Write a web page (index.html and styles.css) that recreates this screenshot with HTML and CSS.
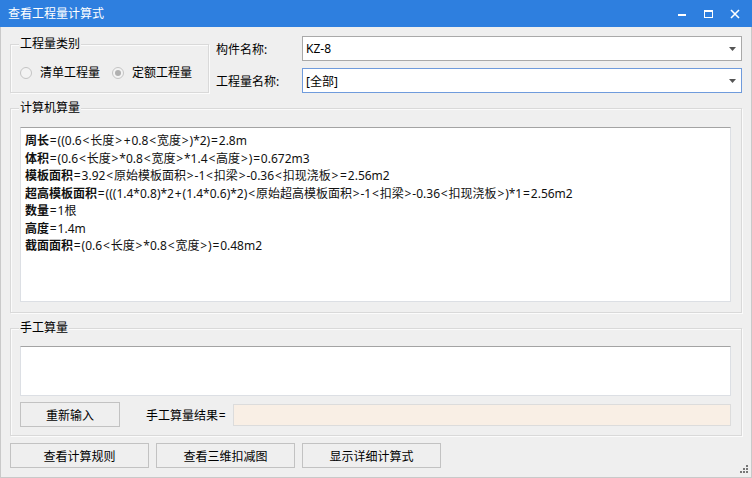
FILE: index.html
```html
<!DOCTYPE html>
<html lang="zh-CN">
<head>
<meta charset="utf-8">
<title>查看工程量计算式</title>
<link rel="stylesheet" href="styles.css">
</head>
<body>
<div class="window">
  <div class="titlebar">
    <span class="title">查看工程量计算式</span>
    <div class="controls">
      <svg class="ctl" width="26" height="27" viewBox="0 0 26 27"><rect x="8" y="14" width="8" height="2" fill="#fff"/></svg>
      <svg class="ctl" width="27" height="27" viewBox="0 0 27 27"><rect x="8.5" y="10.5" width="8" height="7" fill="none" stroke="#fff"/><rect x="8" y="10" width="9" height="2" fill="#fff"/></svg>
      <svg class="ctl" width="27" height="27" viewBox="0 0 27 27"><path d="M8 10l8 8M16 10l-8 8" stroke="#fff" stroke-width="1.6"/></svg>
    </div>
  </div>
  <div class="content">
    <div class="top-row">
      <fieldset class="group type-group">
        <legend>工程量类别</legend>
        <div class="radios">
          <label class="radio"><span class="dot"></span>清单工程量</label>
          <label class="radio checked"><span class="dot"></span>定额工程量</label>
        </div>
      </fieldset>
      <div class="form">
        <span class="label">构件名称:</span>
        <div class="combo"><span>KZ-8</span><svg class="arrow" width="7" height="4" viewBox="0 0 7 4"><path d="M0 0h7L3.5 4z" fill="#555"/></svg></div>
        <span class="label">工程量名称:</span>
        <div class="combo focused"><span>[全部]</span><svg class="arrow" width="7" height="4" viewBox="0 0 7 4"><path d="M0 0h7L3.5 4z" fill="#555"/></svg></div>
      </div>
    </div>
    <fieldset class="group calc-group">
      <legend>计算机算量</legend>
      <div class="textbox formula">
        <div><b>周长</b><span class="op">=</span>((0.6<span class="op">&lt;</span>长度<span class="op">&gt;</span><span class="op">+</span>0.8<span class="op">&lt;</span>宽度<span class="op">&gt;</span>)*2)<span class="op">=</span>2.8m</div>
        <div><b>体积</b><span class="op">=</span>(0.6<span class="op">&lt;</span>长度<span class="op">&gt;</span>*0.8<span class="op">&lt;</span>宽度<span class="op">&gt;</span>*1.4<span class="op">&lt;</span>高度<span class="op">&gt;</span>)<span class="op">=</span>0.672m3</div>
        <div><b>模板面积</b><span class="op">=</span>3.92<span class="op">&lt;</span>原始模板面积<span class="op">&gt;</span>-1<span class="op">&lt;</span>扣梁<span class="op">&gt;</span>-0.36<span class="op">&lt;</span>扣现浇板<span class="op">&gt;</span><span class="op">=</span>2.56m2</div>
        <div><b>超高模板面积</b><span class="op">=</span>(((1.4*0.8)*2<span class="op">+</span>(1.4*0.6)*2)<span class="op">&lt;</span>原始超高模板面积<span class="op">&gt;</span>-1<span class="op">&lt;</span>扣梁<span class="op">&gt;</span>-0.36<span class="op">&lt;</span>扣现浇板<span class="op">&gt;</span>)*1<span class="op">=</span>2.56m2</div>
        <div><b>数量</b><span class="op">=</span>1根</div>
        <div><b>高度</b><span class="op">=</span>1.4m</div>
        <div><b>截面面积</b><span class="op">=</span>(0.6<span class="op">&lt;</span>长度<span class="op">&gt;</span>*0.8<span class="op">&lt;</span>宽度<span class="op">&gt;</span>)<span class="op">=</span>0.48m2</div>
      </div>
    </fieldset>
    <fieldset class="group manual-group">
      <legend>手工算量</legend>
      <div class="textbox manual"></div>
      <div class="manual-row">
        <button class="btn reinput">重新输入</button>
        <span class="result-label">手工算量结果<span class="op">=</span></span>
        <div class="result"></div>
      </div>
    </fieldset>
    <div class="bottom-buttons">
      <button class="btn wide">查看计算规则</button>
      <button class="btn wide">查看三维扣减图</button>
      <button class="btn wide">显示详细计算式</button>
    </div>
    <svg class="grip" width="12" height="12" viewBox="0 0 12 12">
      <rect x="8" y="1" width="2" height="2" fill="#777"/>
      <rect x="5" y="4" width="2" height="2" fill="#777"/>
      <rect x="8" y="4" width="2" height="2" fill="#777"/>
      <rect x="2" y="7" width="2" height="2" fill="#777"/>
      <rect x="5" y="7" width="2" height="2" fill="#777"/>
      <rect x="8" y="7" width="2" height="2" fill="#777"/>
    </svg>
  </div>
</div>
</body>
</html>
```
FILE: styles.css
```css
* { box-sizing: border-box; }
html, body { margin: 0; padding: 0; }
body {
  font-family: "Noto Sans", "Noto Sans CJK SC", sans-serif;
  font-size: 12px;
  color: #000;
  background: #efefef;
}
.window {
  width: 752px;
  height: 478px;
  display: flex;
  flex-direction: column;
  background: #efefef;
}
.titlebar {
  height: 27px;
  background: #2e7fdf;
  display: flex;
  align-items: center;
  justify-content: space-between;
  flex: none;
}
.title {
  color: #fff;
  font-size: 12px;
  padding-left: 8px;
  line-height: 27px;
}
.controls { display: flex; padding-right: 2px; }
.ctl { display: block; }
.content {
  position: relative;
  flex: 1;
  border: 1px solid #c9c9c9;
  border-top: none;
  padding: 9px 9px 0 9px;
  display: flex;
  flex-direction: column;
  gap: 7px;
}
.group {
  margin: 0;
  min-width: 0;
  border: 1px solid #d9d9d9;
  box-shadow: 1px 1px 0 #fbfbfb, inset 1px 1px 0 #fbfbfb;
}
.group legend {
  padding: 0 1px;
  margin-left: -1px;
  line-height: 16px;
  font-size: 12px;
  background: #efefef;
}
.top-row { display: flex; gap: 7px; }
.type-group {
  width: 199px;
  height: 57px;
  padding: 13px 8px 0 9px;
}
.radios { display: flex; gap: 12px; }
.radio { display: flex; align-items: center; gap: 8px; line-height: 16px; }
.dot {
  width: 12px;
  height: 12px;
  border-radius: 50%;
  border: 1px solid #c4c4c4;
  background: #f3f3f3;
  display: flex;
  align-items: center;
  justify-content: center;
}
.radio.checked .dot::after {
  content: "";
  width: 6px;
  height: 6px;
  border-radius: 50%;
  background: #b0b0b0;
}
.form {
  flex: 1;
  display: grid;
  grid-template-columns: 86px 1fr;
  grid-auto-rows: 25px;
  row-gap: 7px;
  align-items: center;
}
.combo {
  height: 25px;
  background: #fff;
  border: 1px solid #a9a9a9;
  display: flex;
  align-items: center;
  justify-content: space-between;
  padding: 0 5px 0 3px;
}
.combo.focused { border-color: #6f9bdc; }
.arrow { display: block; }
.calc-group { padding: 11px 10px 10px 9px; }
.textbox {
  background: #fff;
  border: 1px solid #dcdfe4;
  border-top-color: #a3a3a3;
}
.formula {
  height: 175px;
  padding: 4px 4px;
  line-height: 17.5px;
  white-space: nowrap;
  overflow: hidden;
  color: #111;
}
.formula b { font-weight: 700; }
.op { padding: 0 0.85px; }
.manual-group { padding: 10px 10px 8px 9px; }
.manual { height: 50px; }
.manual-row {
  margin-top: 6px;
  display: flex;
  align-items: center;
}
.btn {
  font-family: inherit;
  font-size: 12px;
  color: #000;
  background: #efefef;
  border: 1px solid #c2c2c2;
  height: 25px;
  padding: 0;
  border-radius: 0;
}
.reinput { width: 100px; margin-right: 26px; }
.result-label { margin-right: 6px; }
.result {
  flex: 1;
  height: 22px;
  background: #f9efe5;
  border: 1px solid #dcdcdc;
}
.bottom-buttons { display: flex; gap: 7px; }
.wide { width: 139px; }
.grip { position: absolute; right: 1px; bottom: 1px; }
```
